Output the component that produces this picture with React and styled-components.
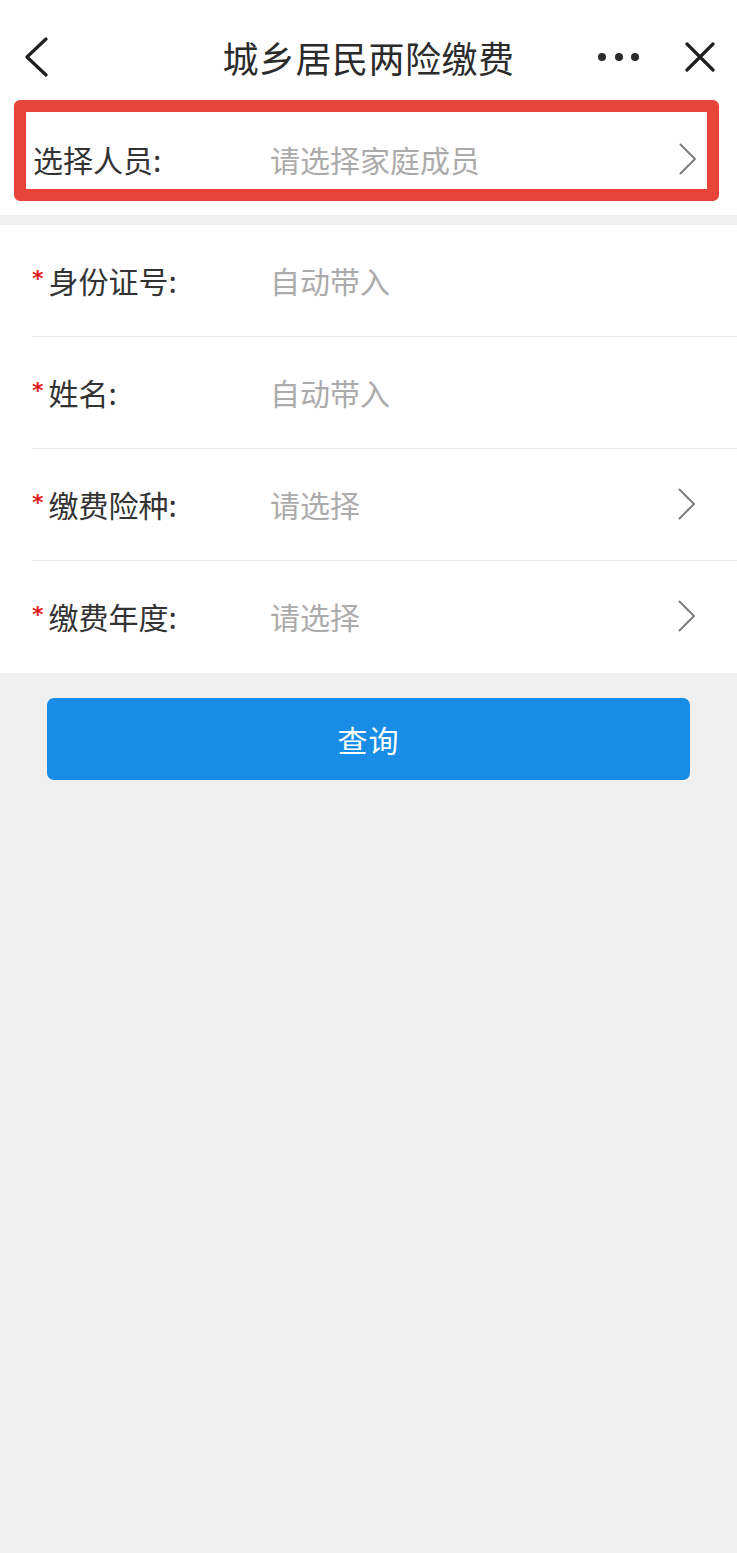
import React from "react";
import styled, { createGlobalStyle } from "styled-components";

const GlobalStyle = createGlobalStyle`
  html, body {
    margin: 0;
    padding: 0;
    background: #f0f0f0;
    font-family: "Noto Sans CJK SC", "Noto Sans", sans-serif;
  }
  * { box-sizing: border-box; }
`;

const Page = styled.div`
  width: 737px;
  min-height: 1553px;
  background: #f0f0f0;
  display: flex;
  flex-direction: column;
`;

const Header = styled.header`
  height: 100px;
  padding-top: 14px;
  background: #fff;
  display: grid;
  grid-template-columns: 1fr auto 1fr;
  align-items: center;
`;

const HeaderLeft = styled.div`
  display: flex;
  align-items: center;
  padding-left: 25px;
`;

const HeaderRight = styled.div`
  display: flex;
  align-items: center;
  justify-content: flex-end;
  gap: 46px;
  padding-right: 22px;
`;

const Title = styled.h1`
  margin: 0;
  font-size: 36px;
  font-weight: 400;
  color: #2b2b2b;
  letter-spacing: 0.5px;
  line-height: 1;
`;

const Dots = styled.div`
  display: flex;
  gap: 8.5px;
`;

const Dot = styled.span`
  width: 8px;
  height: 8px;
  border-radius: 50%;
  background: #2b2b2b;
`;

const PersonSection = styled.section`
  background: #fff;
  padding: 0 18px 14px 14px;
`;

const HighlightBox = styled.div`
  height: 101px;
  border: 12px solid #e8453a;
  border-radius: 6px;
  display: flex;
  align-items: center;
  padding: 16px 10px 0 7px;
`;

const Spacer = styled.div`
  height: 10px;
`;

const Form = styled.section`
  background: #fff;
  padding-left: 32px;
`;

const Row = styled.div`
  height: 112px;
  display: flex;
  align-items: center;
  padding-right: 41px;
  border-bottom: ${(p) => (p.$last ? "none" : "1px solid #e6e6e6")};
  padding-bottom: 2px;
`;

const Label = styled.div`
  width: ${(p) => p.$width}px;
  flex-shrink: 0;
  display: flex;
  align-items: center;
  font-size: 30px;
  color: #333;
  line-height: 1;
`;

const Star = styled.span`
  color: #e0201c;
  font-size: 22px;
  line-height: 1;
  margin-right: 5px;
  align-self: flex-start;
  margin-top: 3px;
  font-family: "DejaVu Sans", sans-serif;
  font-weight: 700;
`;

const Value = styled.div`
  flex: 1;
  font-size: 30px;
  color: #ababab;
  line-height: 1;
`;

const ButtonWrap = styled.div`
  padding: 25px 47px 0;
`;

const QueryButton = styled.button`
  width: 100%;
  height: 82px;
  border: none;
  border-radius: 7px;
  background: #198ce6;
  color: #fff;
  font-family: "Noto Sans CJK SC", "Noto Sans", sans-serif;
  font-size: 30px;
  letter-spacing: 1px;
  padding: 0;
`;

const Chevron = () => (
  <svg width="18" height="32" viewBox="0 0 18 32" fill="none">
    <polyline points="1.5,1.5 16,16 1.5,30.5" stroke="#7d7d7d" strokeWidth="2" strokeLinecap="round" strokeLinejoin="round" />
  </svg>
);

const BackIcon = () => (
  <svg width="23" height="40" viewBox="0 0 23 40" fill="none">
    <polyline points="21,2 2,20 21,38" stroke="#1f1f1f" strokeWidth="3.2" strokeLinecap="round" strokeLinejoin="round" />
  </svg>
);

const CloseIcon = () => (
  <svg width="30" height="30" viewBox="0 0 30 30" fill="none">
    <path d="M2 2 L28 28 M28 2 L2 28" stroke="#1f1f1f" strokeWidth="3.2" strokeLinecap="round" />
  </svg>
);

const fields = [
  { label: "身份证号:", value: "自动带入", arrow: false },
  { label: "姓名:", value: "自动带入", arrow: false },
  { label: "缴费险种:", value: "请选择", arrow: true },
  { label: "缴费年度:", value: "请选择", arrow: true },
];

export default function App() {
  return (
    <Page>
      <GlobalStyle />
      <Header>
        <HeaderLeft>
          <BackIcon />
        </HeaderLeft>
        <Title>城乡居民两险缴费</Title>
        <HeaderRight>
          <Dots>
            <Dot />
            <Dot />
            <Dot />
          </Dots>
          <CloseIcon />
        </HeaderRight>
      </Header>
      <PersonSection>
        <HighlightBox>
          <Label $width={237}>选择人员:</Label>
          <Value>请选择家庭成员</Value>
          <Chevron />
        </HighlightBox>
      </PersonSection>
      <Spacer />
      <Form>
        {fields.map((f, i) => (
          <Row key={f.label} $last={i === fields.length - 1}>
            <Label $width={238}>
              <Star>*</Star>
              {f.label}
            </Label>
            <Value>{f.value}</Value>
            {f.arrow && <Chevron />}
          </Row>
        ))}
      </Form>
      <ButtonWrap>
        <QueryButton>查询</QueryButton>
      </ButtonWrap>
    </Page>
  );
}
